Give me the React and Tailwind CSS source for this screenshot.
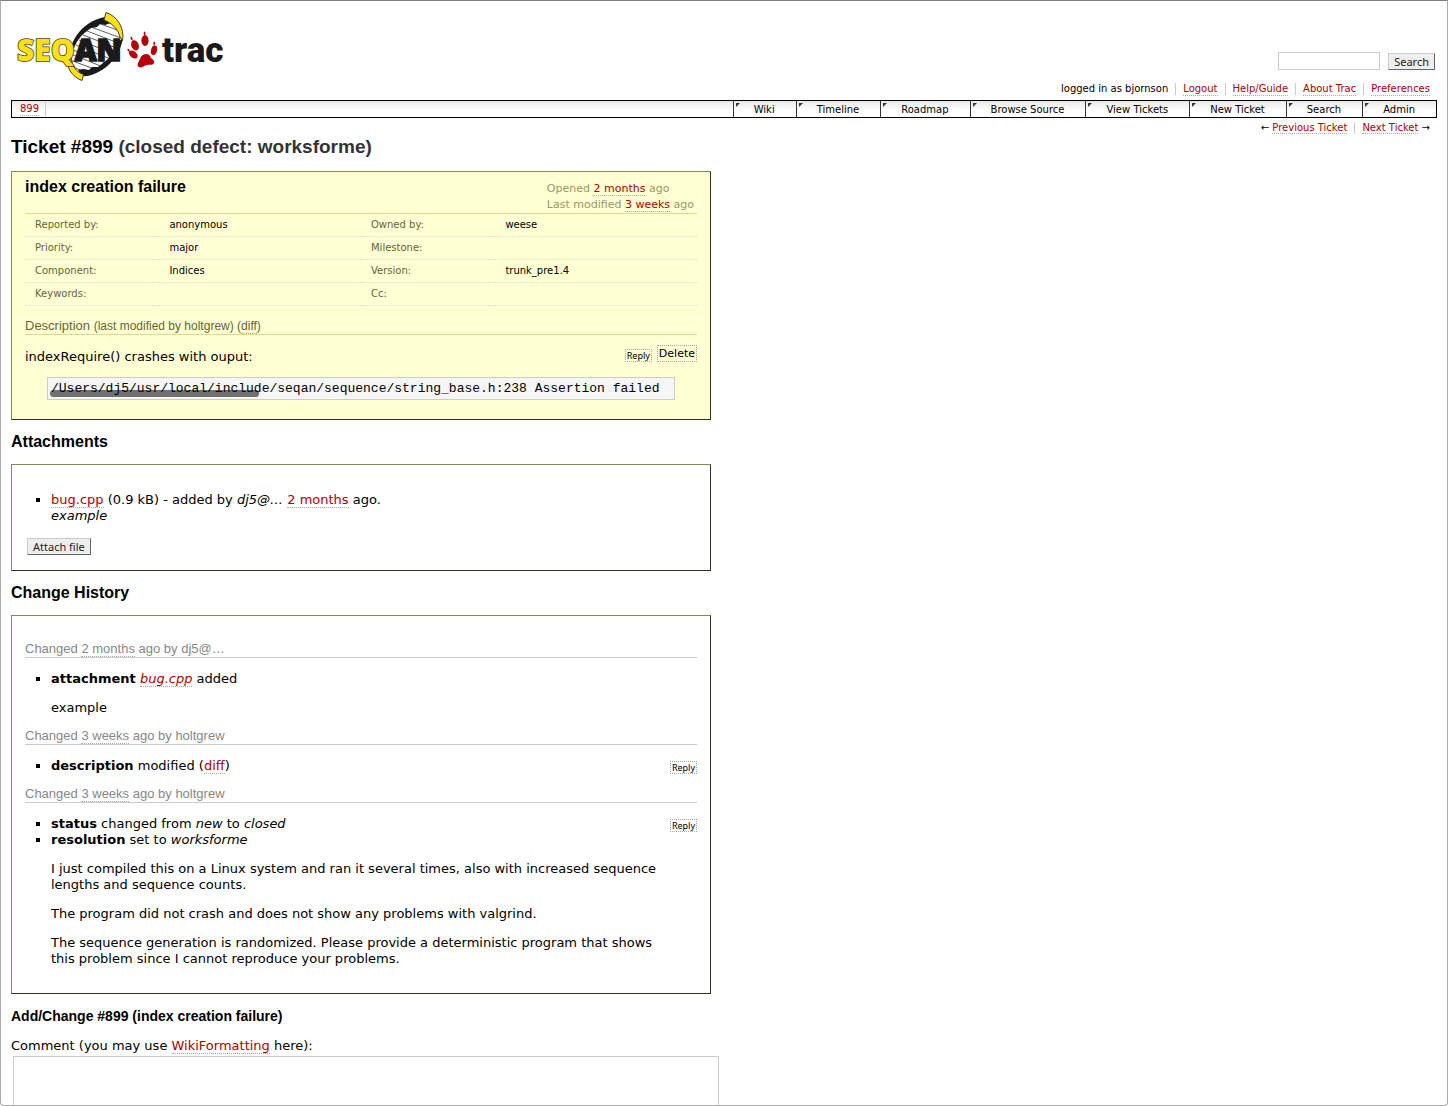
import React from "react";

const link =
  "text-[#b00000] border-b border-dotted border-[#aaaaaa] hover:bg-gray-100";
const panel =
  "w-full max-w-[700px] border border-t-[#888855] border-l-[#888855] border-r-[#333322] border-b-[#333322] px-[13px]";
const nativeButton =
  "bg-[#eeeeee] border border-t-[#cccccc] border-l-[#cccccc] border-r-[#666666] border-b-[#666666] font-['Noto_Sans','Lucida_Grande',sans-serif] text-[#222222] text-[11px] leading-[15px] px-[5px]";
const cell = "border-b border-dotted border-[#ddddcc] p-0 pl-[10px] text-left font-normal";

const navItems = [
  "Wiki",
  "Timeline",
  "Roadmap",
  "Browse Source",
  "View Tickets",
  "New Ticket",
  "Search",
  "Admin",
];
const metaItems = ["Logout", "Help/Guide", "About Trac", "Preferences"];
const properties = [
  ["Reported by:", "anonymous", "Owned by:", "weese"],
  ["Priority:", "major", "Milestone:", ""],
  ["Component:", "Indices", "Version:", "trunk_pre1.4"],
  ["Keywords:", "", "Cc:", ""],
];

function Link({ children, className = "" }) {
  return (
    <a href="#" className={`${link} ${className}`}>
      {children}
    </a>
  );
}

function Logo() {
  return (
    <svg
      width="220"
      height="78"
      viewBox="11 8 220 78"
      role="img"
      aria-label="SeqAn trac"
    >
      <g stroke="#333" strokeWidth="0.8" fill="none">
        <path d="M98 23L120 31M91 27L121 38M87 31L121 44M83 35L119 49M79 40L117 55M76 45L113 60M73 50L108 64M71 54L103 67M70 60L97 70M70 66L88 73" />
      </g>
      <path
        d="M70 50C73 39 79 30 88 24C94 20 99 18 105 17L111 23L105 25L100 24L97 27L91 28L87 31C80 36 76 42 73 51Z"
        fill="#1a1a1a"
      />
      <path
        d="M123 38C121 51 113 63 102 70C95 74 88 77 82 76L78 70L83 69L89 70L92 67L98 67L103 63C110 58 116 51 118 42Z"
        fill="#1a1a1a"
      />
      <path
        d="M106 12.500C117 16 125 28 122.500 41L120 37C118 29 112 23 104 20Z"
        fill="#ffe014"
        stroke="#444422"
        strokeWidth="1"
      />
      <path
        d="M66 56C66 67 72 77 82 80.500L83.500 74.500C76 72 72 66 71 57Z"
        fill="#ffe014"
        stroke="#444422"
        strokeWidth="1"
      />
      <text
        x="17"
        y="61"
        fontFamily="Open Sans, Noto Sans, sans-serif"
        fontWeight="800"
        fontSize="30"
        fill="#ffe014"
        stroke="#444422"
        strokeWidth="1.600"
        paintOrder="stroke"
      >
        SEQ<tspan fill="#1a1a1a" stroke="#1a1a1a">AN</tspan>
      </text>
      <g fill="#b50006">
        <ellipse cx="145" cy="40.500" rx="3.600" ry="5.400" />
        <ellipse cx="135" cy="45.300" rx="3.700" ry="5.300" transform="rotate(-20 135 45.300)" />
        <ellipse cx="154" cy="50.300" rx="3" ry="4.900" transform="rotate(14 154 50.300)" />
        <ellipse cx="133.300" cy="54.500" rx="3.200" ry="5" transform="rotate(-50 133.300 54.500)" />
        <path d="M143.500 54.500C146.500 53.200 149.500 54 150.500 57C151.200 59 154.300 59.500 154.200 62.300C154 65.500 150.500 64.800 148 64.800C145 64.800 143.500 67.600 140.500 67.500C137.500 67.400 136.800 64.500 138.500 62C140 59.700 140.500 56 143.500 54.500Z" />
        <ellipse cx="144.600" cy="33.300" rx="0.900" ry="1.900" />
        <ellipse cx="131.500" cy="38.500" rx="0.900" ry="1.800" transform="rotate(-20 131.500 38.500)" />
        <ellipse cx="154.300" cy="43.300" rx="0.900" ry="1.900" />
        <ellipse cx="128.600" cy="50.300" rx="0.900" ry="1.700" transform="rotate(-35 128.600 50.300)" />
      </g>
      <text
        x="162"
        y="61.500"
        fontFamily="Roboto, sans-serif"
        fontWeight="900"
        fontSize="35"
        fill="#1a1a1a"
      >
        trac
      </text>
    </svg>
  );
}

function Reply() {
  return (
    <button
      type="button"
      className="border border-dotted border-[#aaaaaa] px-px font-['Noto_Sans','Lucida_Grande',sans-serif] text-[9px] leading-[11px]"
    >
      Reply
    </button>
  );
}

function Change({ age, author, reply, children }) {
  return (
    <section className="mb-[11px]">
      <h3 className="border-b border-[#cccccc] font-['Liberation_Sans',Arial,sans-serif] text-[13px] leading-[17px] text-[#888888]">
        Changed{" "}
        <a href="#" className="border-b border-dotted border-[#aaaaaa]">
          {age}
        </a>{" "}
        ago by {author}
      </h3>
      <div className="flex items-start justify-between pt-[13px]">
        <div className="pl-[26px]">{children}</div>
        {reply && (
          <div className="mt-[3px] flex shrink-0">
            <Reply />
          </div>
        )}
      </div>
    </section>
  );
}

export default function App() {
  return (
    <div className="flex h-screen flex-col overflow-hidden rounded-b border border-[#aaaaaa] border-t-[#808080] bg-white px-[10px] font-['DejaVu_Sans',Verdana,sans-serif] text-[13px] leading-4 text-black">
      <header className="flex h-[99px] shrink-0 justify-between">
        <a href="#" className="mt-[7px] self-start">
          <Logo />
        </a>
        <div className="flex flex-col items-end justify-end pb-[3px]">
          <form className="mr-0.5 flex items-center gap-2" onSubmit={(e) => e.preventDefault()}>
            <input
              type="text"
              aria-label="Search"
              className="h-[18px] w-[102px] border border-[#cccccc] px-1 text-[11px]"
            />
            <button type="submit" className={nativeButton}>
              Search
            </button>
          </form>
          <ul className="mt-[11px] mr-[7px] flex items-center text-[10px]">
            <li className="pr-[7px]">logged in as bjornson</li>
            {metaItems.map((item) => (
              <li
                key={item}
                className="flex h-3 items-center border-l border-[#cccccc] px-[7px] last:pr-0"
              >
                <Link className="leading-3">{item}</Link>
              </li>
            ))}
          </ul>
        </div>
      </header>

      <nav className="flex h-[18px] shrink-0 items-stretch justify-between border border-black bg-linear-to-b from-[#e8e8e8] to-white to-60% text-[10px]">
        <div className="my-px flex items-center border-r border-[#cccccc] pr-1.5 pl-2">
          <Link className="leading-3">899</Link>
        </div>
        <ul className="flex">
          {navItems.map((item) => (
            <li key={item} className="relative border-l border-[#333333]">
              <svg
                className="absolute top-0.5 left-0.5"
                width="4"
                height="4"
                viewBox="0 0 4 4"
                aria-hidden="true"
              >
                <path d="M0 0H4L0 4Z" fill="#333" />
              </svg>
              <a href="#" className="block pr-[21px] pl-5 leading-[18px]">
                {item}
              </a>
            </li>
          ))}
        </ul>
      </nav>

      <div className="mt-1 mr-[7px] flex shrink-0 items-center justify-end text-[10px] leading-3">
        <span className="pr-[7px]">
          ← <Link>Previous Ticket</Link>
        </span>
        <span className="border-l border-[#cccccc] pl-[7px]">
          <Link>Next Ticket</Link> →
        </span>
      </div>

      <main className="shrink-0">
        <h1 className="mt-px font-['Liberation_Sans',Arial,sans-serif] text-[19px] leading-6 font-bold">
          Ticket #899{" "}
          <span className="text-[#333333]">(closed defect: worksforme)</span>
        </h1>

        <section className={`${panel} mt-3 bg-[#ffffd4] pb-[19px]`}>
          <div className="flex h-[42px] items-start justify-between border-b border-[#dddd88] pt-[5px]">
            <h2 className="font-['Liberation_Sans',Arial,sans-serif] text-[16px] leading-5 font-bold">
              index creation failure
            </h2>
            <div className="mt-1 pr-[3px] text-[11px] text-[#999966]">
              <p>
                Opened <Link>2 months</Link> ago
              </p>
              <p>
                Last modified <Link>3 weeks</Link> ago
              </p>
            </div>
          </div>
          <table className="w-full table-fixed border-separate border-spacing-0 text-[10px]">
            <tbody>
              {properties.map((row) => (
                <tr key={row[0]} className="h-[23px]">
                  <th className={`${cell} w-1/5 text-[#666633]`}>{row[0]}</th>
                  <td className={`${cell} w-3/10`}>{row[1]}</td>
                  <th className={`${cell} w-1/5 text-[#666633]`}>{row[2]}</th>
                  <td className={`${cell} w-3/10`}>{row[3]}</td>
                </tr>
              ))}
            </tbody>
          </table>
          <h3 className="mt-3 border-b border-[#dddd88] font-['Liberation_Sans',Arial,sans-serif] text-[13px] leading-4 text-[#666633]">
            Description{" "}
            <span className="text-[12px]">
              (last modified by holtgrew) (
              <a href="#" className="border-b border-dotted border-[#aaaaaa]">
                diff
              </a>
              )
            </span>
          </h3>
          <div className="mt-[10px] flex items-start justify-between">
            <p className="mt-1">indexRequire() crashes with ouput:</p>
            <div className="flex items-end gap-[5px]">
              <Reply />
              <button
                type="button"
                className="border border-dotted border-[#aaaaaa] px-px text-[11px] leading-[15px]"
              >
                Delete
              </button>
            </div>
          </div>
          <div className="relative mx-[22px] mt-3">
            <pre className="overflow-hidden border border-[#cccccc] bg-[#f6f6f6] px-[3px] py-[3px] font-['Liberation_Mono','Courier_New',monospace] text-[13px] leading-[15px]">
              /Users/dj5/usr/local/include/seqan/sequence/string_base.h:238 Assertion failed
            </pre>
            <div className="absolute bottom-[3px] left-[3px] h-[7px] w-1/3 rounded-full bg-black/55" />
          </div>
        </section>

        <h2 className="mt-3 font-['Liberation_Sans',Arial,sans-serif] text-[16px] leading-5 font-bold">
          Attachments
        </h2>
        <section className={`${panel} mt-3 pt-[27px] pb-[15px]`}>
          <ul className="list-[square] pl-[26px]">
            <li>
              <Link>bug.cpp</Link> (0.9 kB) - added by <em>dj5@…</em>{" "}
              <Link>2 months</Link> ago.
              <br />
              <em>example</em>
            </li>
          </ul>
          <button type="button" className={`${nativeButton} mt-[14px] ml-0.5 block`}>
            Attach file
          </button>
        </section>

        <h2 className="mt-3 font-['Liberation_Sans',Arial,sans-serif] text-[16px] leading-5 font-bold">
          Change History
        </h2>
        <section className={`${panel} mt-3 pt-[24px] pb-[15px]`}>
          <Change age="2 months" author="dj5@…">
            <ul className="list-[square]">
              <li>
                <strong>attachment</strong> <Link className="italic">bug.cpp</Link> added
              </li>
            </ul>
            <p className="mt-[13px]">example</p>
          </Change>
          <Change age="3 weeks" author="holtgrew" reply>
            <ul className="list-[square]">
              <li>
                <strong>description</strong> modified (<Link>diff</Link>)
              </li>
            </ul>
          </Change>
          <Change age="3 weeks" author="holtgrew" reply>
            <ul className="list-[square]">
              <li>
                <strong>status</strong> changed from <em>new</em> to <em>closed</em>
              </li>
              <li>
                <strong>resolution</strong> set to <em>worksforme</em>
              </li>
            </ul>
            <p className="mt-[13px]">
              I just compiled this on a Linux system and ran it several times, also
              with increased sequence lengths and sequence counts.
            </p>
            <p className="mt-[13px]">
              The program did not crash and does not show any problems with valgrind.
            </p>
            <p className="mt-[13px]">
              The sequence generation is randomized. Please provide a deterministic
              program that shows this problem since I cannot reproduce your problems.
            </p>
          </Change>
        </section>

        <h2 className="mt-3 font-['Liberation_Sans',Arial,sans-serif] text-[14px] leading-5 font-bold">
          Add/Change #899 (index creation failure)
        </h2>
        <label htmlFor="comment" className="mt-3 block">
          Comment (you may use <Link>WikiFormatting</Link> here):
        </label>
        <textarea
          id="comment"
          rows="10"
          className="mx-0.5 mt-0.5 block w-full max-w-[706px] resize-none border border-[#cccccc] p-1"
        />
      </main>
    </div>
  );
}
